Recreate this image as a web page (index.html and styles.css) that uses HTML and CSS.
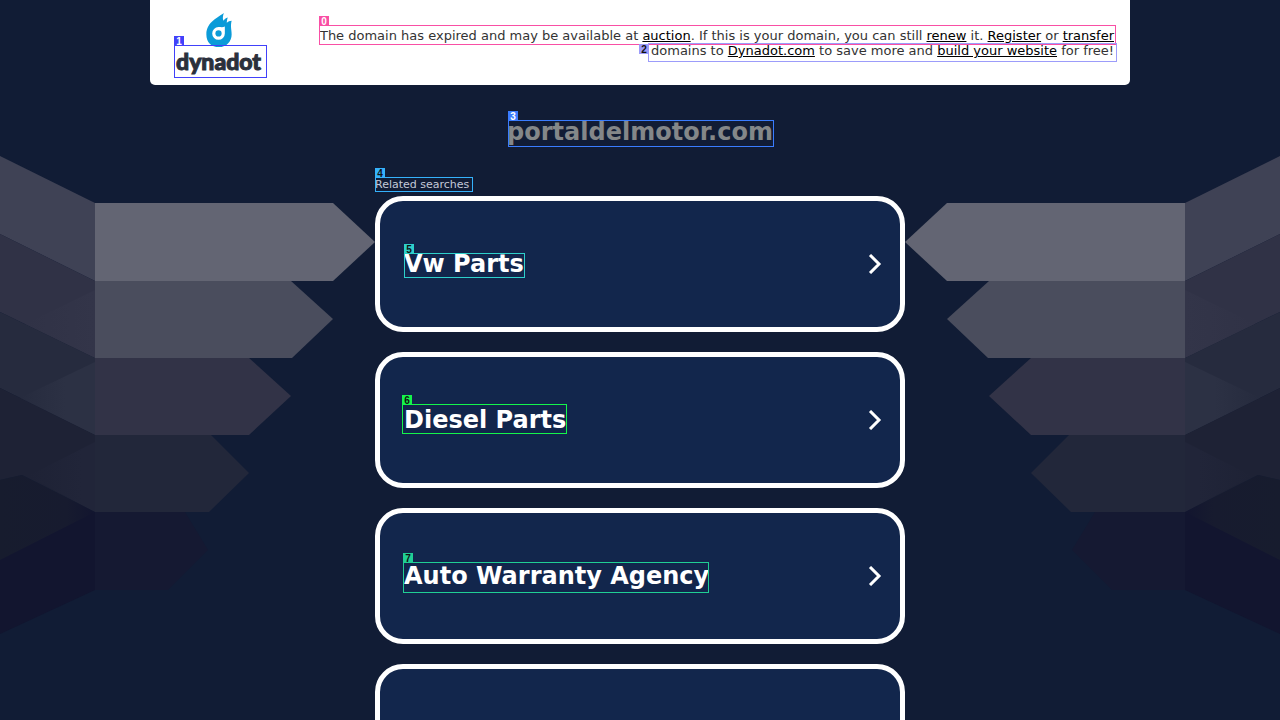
FILE: index.html
```html
<!DOCTYPE html>
<html lang="en">
<head>
<meta charset="utf-8">
<meta name="viewport" content="width=device-width, initial-scale=1">
<title>portaldelmotor.com</title>
<link rel="stylesheet" href="styles.css">
</head>
<body>
<svg class="backdrop" viewBox="0 0 1280 720" preserveAspectRatio="xMidYMin slice" aria-hidden="true">
  <defs>
    <linearGradient id="fade2"><stop offset="0" stop-color="#303246"/><stop offset="1" stop-color="#333549"/></linearGradient>
    <linearGradient id="fade3"><stop offset="0" stop-color="#262b3e"/><stop offset=".6" stop-color="#2c3144"/></linearGradient>
    <linearGradient id="fade4"><stop offset="0" stop-color="#1e2235"/><stop offset=".8" stop-color="#212539"/></linearGradient>
    <linearGradient id="fade5"><stop offset="0" stop-color="#171c2e"/><stop offset=".7" stop-color="#171b2f"/><stop offset="1" stop-color="#12152f"/></linearGradient>
    <g id="arrows">
      <path fill="#3f4255" d="M0 156L95 203V281L0 234Z"/>
      <path fill="#303246" d="M0 234L95 281V358L0 312Z"/>
      <path fill="url(#fade2)" d="M25 324L95 290V358Z"/>
      <path fill="#262b3e" d="M0 312L95 358V435L0 388Z"/>
      <path fill="url(#fade3)" d="M20 398L95 362V435Z"/>
      <path fill="#1e2235" d="M0 388L95 435V512L22 475L0 480Z"/>
      <path fill="url(#fade4)" d="M28 476L95 442V512Z"/>
      <path fill="#12152f" d="M0 540L95 512V590L0 634Z"/>
      <path fill="url(#fade5)" d="M0 480L22 475L95 512L0 560Z"/>
      <path fill="#636573" d="M95 203H333L375 242L333 281H95Z"/>
      <path fill="#4a4d5d" d="M95 281H291L333 319L292 358H95Z"/>
      <path fill="#323347" d="M95 358H249L291 396L249 435H95Z"/>
      <path fill="#22273a" d="M95 435H211L249 473L209 512H95Z"/>
      <path fill="#151932" d="M95 512H185L208 550L168 590H95Z"/>
    </g>
  </defs>
  <use href="#arrows"/>
  <use href="#arrows" transform="translate(1280 0) scale(-1 1)"/>
</svg>

<div class="page">
  <header class="banner">
    <a class="logo" href="#" aria-label="dynadot">
      <svg class="flame" viewBox="0 0 28 36" aria-hidden="true">
        <path fill="#0b9bd8" d="M19 0C14 4 1 9 1 22C1 30 6 35 14 35C22 35 27 29 27 22C27 17 25.500 14 27 8C25 8 23.500 9 22 10C22 8 22.500 6 23 4.500C21 5 19.500 6.500 18.500 8C17.500 5 18 3 19 0Z"/>
        <path fill="#fff" d="M20 14V21A6.500 6.500 0 1 1 13.500 14.500C16 14.500 18 15 20 14Z"/>
        <circle cx="13.500" cy="21" r="3.200" fill="#0b9bd8"/>
      </svg>
      <span class="wordmark marked">dynadot<i class="mark mark-1"><b>1</b></i></span>
    </a>
    <p class="notice">
      <span class="line marked">The domain has expired and may be available at <a href="#">auction</a>. If this is your domain, you can still <a href="#">renew</a> it. <a href="#">Register</a> or <a href="#">transfer</a><i class="mark mark-0"><b>0</b></i></span>
      <span class="line marked">domains to <a href="#">Dynadot.com</a> to save more and <a href="#">build your website</a> for free!<i class="mark mark-2"><b>2</b></i></span>
    </p>
  </header>

  <main class="content">
    <h1 class="domain"><span class="marked">portaldelmotor.com<i class="mark mark-3"><b>3</b></i></span></h1>
    <p class="related"><span class="marked">Related searches<i class="mark mark-4"><b>4</b></i></span></p>
    <nav class="cards" aria-label="Related searches">
      <a class="card" href="#"><span class="marked">Vw Parts<i class="mark mark-5"><b>5</b></i></span><svg class="chevron" viewBox="0 0 14 20" aria-hidden="true"><path d="M2 1L11 10L2 19"/></svg></a>
      <a class="card" href="#"><span class="marked">Diesel Parts<i class="mark mark-6"><b>6</b></i></span><svg class="chevron" viewBox="0 0 14 20" aria-hidden="true"><path d="M2 1L11 10L2 19"/></svg></a>
      <a class="card" href="#"><span class="marked">Auto Warranty Agency<i class="mark mark-7"><b>7</b></i></span><svg class="chevron" viewBox="0 0 14 20" aria-hidden="true"><path d="M2 1L11 10L2 19"/></svg></a>
      <div class="card"></div>
    </nav>
  </main>
</div>
</body>
</html>
```
FILE: styles.css
```css
* { box-sizing: border-box; }

body {
  margin: 0;
  height: 100vh;
  overflow: hidden;
  background: #111c35;
  color: #fff;
  font-family: "DejaVu Sans", Verdana, sans-serif;
}

.backdrop {
  position: absolute;
  inset: 0;
  width: 100%;
  height: 100%;
}

.page { position: relative; }

.banner {
  display: flex;
  justify-content: space-between;
  align-items: flex-start;
  max-width: 980px;
  min-height: 85px;
  margin: 0 auto;
  padding: 13px 16px 8px 26px;
  border-radius: 0 0 5px 5px;
  background: #fff;
}

.logo {
  display: flex;
  flex-direction: column;
  align-items: center;
  color: #2b303b;
  text-decoration: none;
}

.flame { width: 28px; height: 35px; }

.wordmark {
  margin-top: -3px;
  font: 900 23px/32px Lato, "Open Sans", sans-serif;
  -webkit-text-stroke: 1px #2b303b;
}

.wordmark .mark { -webkit-text-stroke: 0; }

.notice {
  display: flex;
  flex-direction: column;
  align-items: flex-end;
  margin: 15px 0 0;
  color: #333;
  font-size: 13px;
  line-height: 15px;
}

.notice a { color: #000; }

.content {
  max-width: 530px;
  margin: 0 auto;
}

.domain {
  margin: 32px 0 0;
  color: #848789;
  font-size: 24px;
  line-height: 30px;
  text-align: center;
}

.related {
  margin: 31px 0 4px;
  color: #c3c9d8;
  font-size: 11px;
  line-height: 14px;
}

.cards {
  display: flex;
  flex-direction: column;
  gap: 20px;
}

.card {
  display: flex;
  align-items: center;
  justify-content: space-between;
  min-height: 136px;
  padding: 0 18px 0 24px;
  border: 5px solid #fff;
  border-radius: 28px;
  background: #12264c;
  color: #fff;
  font-size: 24px;
  font-weight: 700;
  line-height: 30px;
  text-decoration: none;
}

.chevron {
  width: 14px;
  height: 20px;
  fill: none;
  stroke: #fff;
  stroke-width: 3;
}

/* Numbered outlines laid over the labelled text */
.marked { position: relative; }

.mark {
  position: absolute;
  inset: 0;
  border: 1px solid var(--tone);
  font-style: normal;
  pointer-events: none;
}

.mark b {
  position: absolute;
  left: -1px;
  bottom: 100%;
  width: 10px;
  height: 10px;
  background: var(--tone);
  color: var(--ink, #111);
  font: 700 10px/11px "Liberation Sans", Arial, sans-serif;
  text-align: center;
}

.mark-0 { --tone: #f94fa5; --ink: #fff; inset: -3px -2px -2px -1px; }
.mark-1 { --tone: #4141fa; --ink: #fff; inset: 0 -6px -1px -2px; }
.mark-2 { --tone: #9c9cfa; inset: 0 -3px -4px -3px; }
.mark-2 b { left: -10px; bottom: auto; top: 0; }
.mark-3 { --tone: #3a7cff; --ink: #fff; inset: 2px -1px -1px 1px; }
.mark-4 { --tone: #35b1fb; inset: -1px -4px -1px 0; }
.mark-5 { --tone: #2ed0cb; inset: 4px -1px 1px 0; }
.mark-6 { --tone: #14f54b; inset: -1px -1px 1px -2px; }
.mark-7 { --tone: #20ce94; inset: 1px 0 -2px -1px; }
```
